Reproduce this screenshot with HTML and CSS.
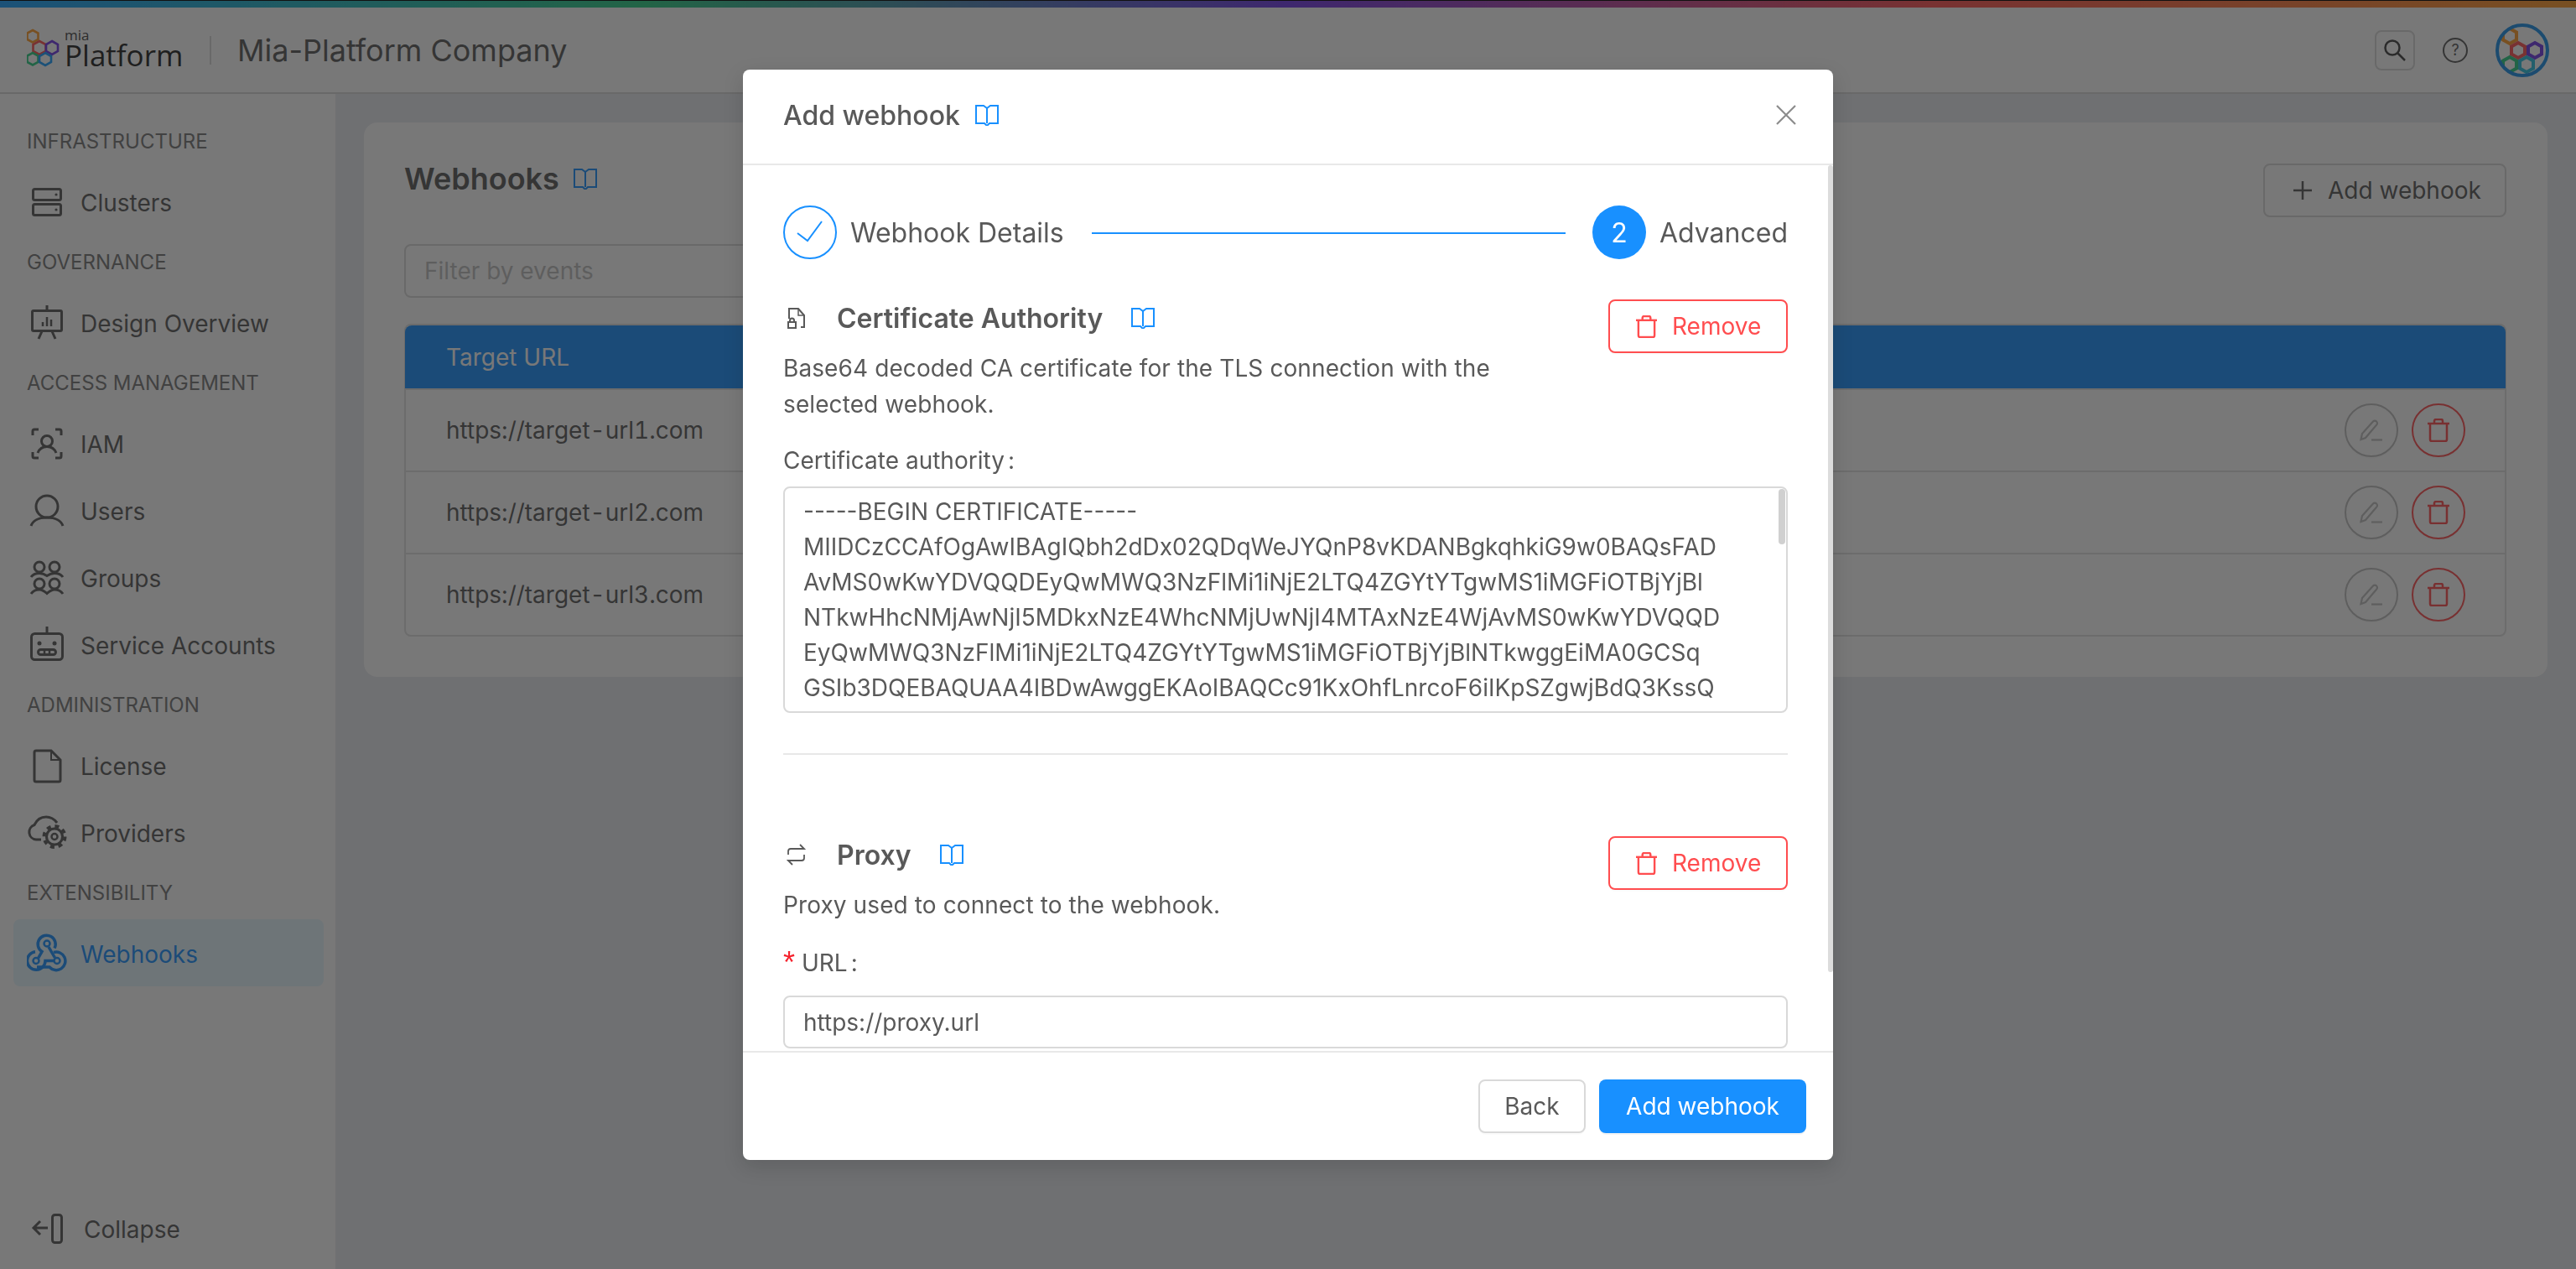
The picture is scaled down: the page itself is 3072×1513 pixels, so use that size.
FILE: index.html
```html
<!DOCTYPE html>
<html lang="en">
<head>
<meta charset="utf-8">
<title>Webhooks</title>
<link rel="stylesheet" href="styles.css">
</head>
<body>
<svg class="sprite" xmlns="http://www.w3.org/2000/svg">
  <symbol id="i-clusters" viewBox="0 0 48 48"><g fill="none" stroke="currentColor" stroke-width="3"><rect x="7.5" y="9.5" width="33" height="13" rx="2"/><rect x="7.5" y="27.5" width="33" height="13" rx="2"/></g><circle cx="35" cy="16" r="1.6" fill="currentColor"/><circle cx="35" cy="34" r="1.6" fill="currentColor"/></symbol>
  <symbol id="i-design" viewBox="0 0 48 48"><g fill="none" stroke="currentColor" stroke-width="3"><rect x="6.5" y="10.5" width="35" height="24" rx="1.5"/><path d="M24 4v6M18 35l-4 9M30 35l4 9"/><path d="M19 29v-5M24 29V18M29 29v-8" stroke-width="2.5"/></g></symbol>
  <symbol id="i-iam" viewBox="0 0 48 48"><g fill="none" stroke="currentColor" stroke-width="3"><path d="M7 15V10a2 2 0 0 1 2-2h5M34 8h5a2 2 0 0 1 2 2v5M41 35v5a2 2 0 0 1-2 2h-5M14 42H9a2 2 0 0 1-2-2v-5"/><circle cx="24" cy="22" r="6.5"/><path d="M13 36c2-5 6-7.500 11-7.500s9 2.500 11 7.500"/></g></symbol>
  <symbol id="i-users" viewBox="0 0 48 48"><g fill="none" stroke="currentColor" stroke-width="3"><circle cx="24" cy="20" r="13"/><path d="M5 43c2-6 9-10 19-10s17 4 19 10"/></g></symbol>
  <symbol id="i-groups" viewBox="0 0 48 48"><g fill="none" stroke="currentColor" stroke-width="3"><circle cx="15" cy="12" r="6"/><circle cx="33" cy="12" r="6"/><circle cx="15" cy="32" r="6"/><circle cx="33" cy="32" r="6"/><path d="M5 24c2-3 6-4.500 10-4.500 4 0 6 1 9 3 3-2 5-3 9-3s8 1.500 10 4.500"/><path d="M5 44c2-3 6-5 10-5s6 2 9 4.500c3-2.500 5-4.500 9-4.500s8 2 10 5"/></g></symbol>
  <symbol id="i-service" viewBox="0 0 48 48"><g fill="none" stroke="currentColor" stroke-width="3"><rect x="5.500" y="11.500" width="37" height="31" rx="4"/><path d="M24 3v8"/><rect x="13.500" y="30.500" width="21" height="6" rx="3"/><path d="M21 31v5M27 31v5" stroke-width="2.500"/></g><circle cx="15" cy="23" r="2.500" fill="currentColor"/><circle cx="33" cy="23" r="2.500" fill="currentColor"/></symbol>
  <symbol id="i-license" viewBox="0 0 48 48"><g fill="none" stroke="currentColor" stroke-width="3"><path d="M11 7h18l11 11v24a2 2 0 0 1-2 2H11a2 2 0 0 1-2-2V9a2 2 0 0 1 2-2z"/><path d="M29 7v11h11" stroke-width="2"/></g></symbol>
  <symbol id="i-providers" viewBox="0 0 48 48"><g fill="none" stroke="currentColor" stroke-width="3"><path d="M17 33h-6a9 9 0 0 1-2-17.500C12 9 17 6 23 6c6 0 10 3 13 7"/><circle cx="33" cy="29.500" r="9.500"/><circle cx="33" cy="29.500" r="12.500" stroke-width="4" stroke-dasharray="5 4.820"/><circle cx="33" cy="29.500" r="3.500" stroke-width="2.500"/></g></symbol>
  <symbol id="i-webhooks" viewBox="0 0 48 48"><g fill="none" stroke="currentColor" stroke-width="3.500"><circle cx="24" cy="13" r="3.500" stroke-width="2.500"/><circle cx="11" cy="33.500" r="3.500" stroke-width="2.500"/><circle cx="36" cy="33.500" r="3.500" stroke-width="2.500"/><path d="M13.500 30.500L18 22.500A10.500 10.500 0 1 1 33 18.500"/><path d="M26 17l7.500 13"/><path d="M32 23.500A10.800 10.800 0 1 1 27 41H12"/><path d="M10 22.700A10.800 10.800 0 1 0 22 33.500H32"/></g></symbol>
  <symbol id="i-collapse" viewBox="0 0 48 48"><g fill="none" stroke="currentColor" stroke-width="3"><rect x="30.500" y="8.500" width="11" height="33" rx="3"/><path d="M25 24H8M16 16l-8 8 8 8"/></g></symbol>
  <symbol id="i-book" viewBox="0 0 28 26"><path d="M1 2h9l4 3 4-3h9v21H17l-3 3-3-3H1zM14 5v18" fill="none" stroke="currentColor" stroke-width="2"/></symbol>
  <symbol id="i-trash" viewBox="0 0 26 28"><g fill="none" stroke="currentColor" stroke-width="2.500"><path d="M0 6h26"/><path d="M8 6V3a2 2 0 0 1 2-2h6a2 2 0 0 1 2 2v3"/><path d="M3 6v19a2 2 0 0 0 2 2h16a2 2 0 0 0 2-2V6"/></g></symbol>
  <symbol id="i-pencil" viewBox="0 0 28 28"><g fill="none" stroke="currentColor" stroke-width="2.200"><path d="M1.500 25l1.500-7L16 3.500c1-1.200 3-1.200 4 0 1.300 1 1.300 3 .2 4L7 23z"/><path d="M14 25.500h13"/></g></symbol>
  <symbol id="i-filelock" viewBox="0 0 24 26"><g fill="none" stroke="currentColor" stroke-width="2"><path d="M3 14V2h11l7 8v14h-4"/><path d="M14 2v8h7" stroke-width="1.500"/><rect x="2" y="18" width="9" height="7"/><path d="M4 18v-2a2.500 2.500 0 0 1 5 0v2"/></g></symbol>
  <symbol id="i-swap" viewBox="0 0 24 26"><g fill="none" stroke="currentColor" stroke-width="1.800"><path d="M2 13V9a3 3 0 0 1 3-3h16l-5-5"/><path d="M21 13v4a3 3 0 0 1-3 3H2l5 5"/></g></symbol>
  <symbol id="i-plus" viewBox="0 0 24 24"><path d="M12 1v22M1 12h22" fill="none" stroke="currentColor" stroke-width="2.500"/></symbol>
  <symbol id="i-search" viewBox="0 0 28 28"><g fill="none" stroke="currentColor" stroke-width="2.500"><circle cx="11" cy="11" r="8.500"/><path d="M17 17l9 9"/></g></symbol>
  <symbol id="i-close" viewBox="0 0 24 24"><path d="M1 1l22 22M23 1L1 23" fill="none" stroke="currentColor" stroke-width="2.200"/></symbol>
  <symbol id="i-check" viewBox="0 0 64 64"><path d="M17 33l12 9 17-23" fill="none" stroke="currentColor" stroke-width="2"/></symbol>
</svg>

<div class="app">
  <div class="rainbow"></div>
  <header class="topbar">
    <div class="brand">
      <svg class="brand-mark" viewBox="0 0 48 56" xmlns="http://www.w3.org/2000/svg">
        <g fill="none" stroke-width="2.600">
          <polygon stroke="#ff9b2a" points="7,2 13.500,5.500 13.500,13 7,16.500 .500,13 .500,5.500" />
          <polygon stroke="#ff5050" points="15,15 22.500,19 22.500,27 15,31 7.500,27 7.500,19" />
          <polygon stroke="#6e37e6" points="30,15 37,19 37,27 30,31 23,27 23,19" />
          <polygon stroke="#2acd82" points="7,29 13.500,32.500 13.500,40 7,43.500 .500,40 .500,32.500" />
          <polygon stroke="#1a9fff" points="22,29 29,33 29,40 22,44 15,40 15,33" />
        </g>
      </svg>
      <div class="wordmark"><span class="wordmark-mia">mia</span><span class="wordmark-platform">Platform</span></div>
    </div>
    <div class="brand-divider"></div>
    <div class="company">Mia-Platform Company</div>
    <div class="topbar-actions">
      <button class="search-btn"><svg class="ic-28"><use href="#i-search"/></svg></button>
      <span class="help">?</span>
      <svg class="avatar" viewBox="0 0 64 64" xmlns="http://www.w3.org/2000/svg">
        <defs><clipPath id="avatar-clip"><circle cx="32" cy="32" r="30"/></clipPath></defs>
        <g clip-path="url(#avatar-clip)" fill="none" stroke-width="4">
          <polygon stroke="#ff9b2a" points="17,6 25,10.500 25,19.500 17,24 9,19.500 9,10.500"/>
          <polygon stroke="#ff5050" points="27,23 35,27.500 35,36.500 27,41 19,36.500 19,27.500"/>
          <polygon stroke="#6e37e6" points="47,23 55,27.500 55,36.500 47,41 39,36.500 39,27.500"/>
          <polygon stroke="#2acd82" points="17,40 25,44.500 25,53.500 17,58 9,53.500 9,44.500"/>
          <polygon stroke="#2ac0e0" points="37,40 45,44.500 45,53.500 37,58 29,53.500 29,44.500"/>
        </g>
        <circle cx="32" cy="32" r="30" fill="none" stroke="#1a90e8" stroke-width="4"/>
      </svg>
    </div>
  </header>
  <div class="layout">
    <nav class="sidebar">
      <div class="nav-label">INFRASTRUCTURE</div>
      <a class="nav-item"><svg class="nav-icon"><use href="#i-clusters"/></svg>Clusters</a>
      <div class="nav-label">GOVERNANCE</div>
      <a class="nav-item"><svg class="nav-icon"><use href="#i-design"/></svg>Design Overview</a>
      <div class="nav-label">ACCESS MANAGEMENT</div>
      <a class="nav-item"><svg class="nav-icon"><use href="#i-iam"/></svg>IAM</a>
      <a class="nav-item"><svg class="nav-icon"><use href="#i-users"/></svg>Users</a>
      <a class="nav-item"><svg class="nav-icon"><use href="#i-groups"/></svg>Groups</a>
      <a class="nav-item"><svg class="nav-icon"><use href="#i-service"/></svg>Service Accounts</a>
      <div class="nav-label">ADMINISTRATION</div>
      <a class="nav-item"><svg class="nav-icon"><use href="#i-license"/></svg>License</a>
      <a class="nav-item"><svg class="nav-icon"><use href="#i-providers"/></svg>Providers</a>
      <div class="nav-label">EXTENSIBILITY</div>
      <a class="nav-item nav-item-active"><svg class="nav-icon"><use href="#i-webhooks"/></svg>Webhooks</a>
      <a class="nav-item nav-collapse"><svg class="nav-icon"><use href="#i-collapse"/></svg>Collapse</a>
    </nav>
    <main class="content">
      <section class="card">
        <div class="card-head">
          <h1 class="card-title">Webhooks<svg class="ic-book card-book"><use href="#i-book"/></svg></h1>
          <button class="btn-add"><svg class="ic-plus"><use href="#i-plus"/></svg>Add webhook</button>
        </div>
        <div class="filter">Filter by events</div>
        <div class="table">
          <div class="table-head">Target URL</div>
          <div class="table-row"><span>https://target-url1.com</span><span class="row-actions"><button class="round round-edit"><svg class="ic-28"><use href="#i-pencil"/></svg></button><button class="round round-del"><svg class="ic-trash-lg"><use href="#i-trash"/></svg></button></span></div>
          <div class="table-row"><span>https://target-url2.com</span><span class="row-actions"><button class="round round-edit"><svg class="ic-28"><use href="#i-pencil"/></svg></button><button class="round round-del"><svg class="ic-trash-lg"><use href="#i-trash"/></svg></button></span></div>
          <div class="table-row"><span>https://target-url3.com</span><span class="row-actions"><button class="round round-edit"><svg class="ic-28"><use href="#i-pencil"/></svg></button><button class="round round-del"><svg class="ic-trash-lg"><use href="#i-trash"/></svg></button></span></div>
        </div>
      </section>
    </main>
  </div>
</div>

<div class="mask">
  <div class="modal">
    <div class="modal-head">
      <div class="modal-title">Add webhook<svg class="ic-book modal-book"><use href="#i-book"/></svg></div>
      <svg class="ic-close"><use href="#i-close"/></svg>
    </div>
    <div class="modal-body">
      <div class="steps">
        <span class="step-circle step-done"><svg class="ic-check"><use href="#i-check"/></svg></span>
        <span class="step-title">Webhook Details</span>
        <span class="step-line"></span>
        <span class="step-circle step-current">2</span>
        <span class="step-title">Advanced</span>
      </div>

      <div class="section section-cert">
        <div class="section-head">
          <div class="section-intro">
            <h2 class="section-title"><svg class="section-icon"><use href="#i-filelock"/></svg>Certificate Authority<svg class="ic-book section-book"><use href="#i-book"/></svg></h2>
            <p class="section-desc">Base64 decoded CA certificate for the TLS connection with the selected webhook.</p>
          </div>
          <button class="btn-remove"><svg class="ic-trash"><use href="#i-trash"/></svg>Remove</button>
        </div>
        <div class="field-label field-label-tight">Certificate authority<span class="colon">:</span></div>
        <div class="textarea">-----BEGIN CERTIFICATE-----
MIIDCzCCAfOgAwIBAgIQbh2dDx02QDqWeJYQnP8vKDANBgkqhkiG9w0BAQsFAD
AvMS0wKwYDVQQDEyQwMWQ3NzFlMi1iNjE2LTQ4ZGYtYTgwMS1iMGFiOTBjYjBl
NTkwHhcNMjAwNjI5MDkxNzE4WhcNMjUwNjI4MTAxNzE4WjAvMS0wKwYDVQQD
EyQwMWQ3NzFlMi1iNjE2LTQ4ZGYtYTgwMS1iMGFiOTBjYjBlNTkwggEiMA0GCSq
GSIb3DQEBAQUAA4IBDwAwggEKAoIBAQCc91KxOhfLnrcoF6iIKpSZgwjBdQ3KssQ<span class="textarea-thumb"></span></div>
      </div>

      <div class="section-divider"></div>

      <div class="section section-proxy">
        <div class="section-head">
          <div class="section-intro">
            <h2 class="section-title"><svg class="section-icon"><use href="#i-swap"/></svg>Proxy<svg class="ic-book section-book section-book-proxy"><use href="#i-book"/></svg></h2>
            <p class="section-desc">Proxy used to connect to the webhook.</p>
          </div>
          <button class="btn-remove"><svg class="ic-trash"><use href="#i-trash"/></svg>Remove</button>
        </div>
        <div class="field-label"><span class="required">*</span>URL<span class="colon">:</span></div>
        <div class="input">https://proxy.url</div>
      </div>
      <span class="modal-thumb"></span>
    </div>
    <div class="modal-foot">
      <button class="btn-back">Back</button>
      <button class="btn-primary">Add webhook</button>
    </div>
  </div>
</div>
</body>
</html>
```
FILE: styles.css
```css
* { box-sizing: border-box; }
html, body { margin: 0; height: 100%; }
body {
  font-family: Inter, "Liberation Sans", sans-serif;
  font-size: 28px;
  color: #595959;
  background: #e8ebf0;
  overflow: hidden;
}
.sprite { display: none; }
button { font: inherit; color: inherit; background: #fff; cursor: pointer; }

.app { height: 1513px; display: flex; flex-direction: column; }
.rainbow {
  height: 9px;
  flex: none;
  border-top: 1px solid #000;
  background: linear-gradient(90deg, #1a9fff 0%, #2acd82 25%, #6e37e6 50%, #ff5050 75%, #ff9b2a 100%);
}
.topbar {
  height: 103px;
  flex: none;
  display: flex;
  align-items: center;
  padding: 0 32px;
  background: #fff;
  border-bottom: 2px solid #d9d9d9;
}
.brand { display: flex; align-items: center; width: 218px; }
.brand-mark { width: 48px; height: 56px; margin-right: -3px; margin-top: 5px; flex: none; }
.wordmark { display: flex; flex-direction: column; color: #222; font-family: "Open Sans", sans-serif; margin-top: -6px; }
.wordmark-mia { font-size: 17px; line-height: 18px; color: #444; }
.wordmark-platform { font-size: 35px; line-height: 30px; }
.brand-divider { width: 2px; height: 34px; background: #d9d9d9; }
.company { font-size: 36px; margin-left: 31px; color: #595959; }
.topbar-actions { margin-left: auto; display: flex; align-items: center; gap: 34px; }
.search-btn {
  width: 48px; height: 48px;
  border: 2px solid #d9d9d9;
  border-radius: 8px;
  padding: 0;
  display: flex; align-items: center; justify-content: center;
  color: #404040;
}
.ic-28 { width: 28px; height: 28px; display: block; }
.help {
  width: 30px; height: 30px;
  border: 2px solid #595959;
  border-radius: 50%;
  font-size: 18px;
  line-height: 26px;
  text-align: center;
  margin: 0 -1px;
}
.avatar { width: 64px; height: 64px; display: block; }

.layout { flex: 1; display: flex; min-height: 0; }
.sidebar {
  width: 400px;
  flex: none;
  background: #fff;
  padding: 24px 14px 9px 16px;
  display: flex;
  flex-direction: column;
}
.nav-label {
  height: 64px;
  display: flex;
  align-items: center;
  padding-left: 16px;
  font-size: 24px;
  color: #777;
}
.nav-item {
  height: 80px;
  flex: none;
  display: flex;
  align-items: center;
  gap: 16px;
  padding: 3px 0 0 16px;
  border-radius: 8px;
  color: #595959;
}
.nav-icon { width: 48px; height: 48px; flex: none; color: #595959; margin-top: -3px; }
.nav-item-active { background: #e6f7ff; color: #1890ff; }
.nav-item-active .nav-icon { color: #1890ff; }
.nav-collapse { margin-top: auto; gap: 20px; }

.content { flex: 1; padding: 34px; min-width: 0; }
.card { background: #fff; border-radius: 16px; padding: 49px 49px 48px 48px; }
.card-head { display: flex; justify-content: space-between; align-items: flex-start; }
.card-title {
  margin: 0;
  font-size: 36px;
  line-height: 36px;
  font-weight: 600;
  display: flex;
  align-items: center;
}
.ic-book { width: 28px; height: 26px; flex: none; color: #1890ff; }
.card-book { margin-left: 17px; }
.btn-add {
  width: 290px; height: 64px;
  border: 2px solid #d9d9d9;
  border-radius: 8px;
  display: flex; align-items: center;
  padding-left: 33px;
  gap: 18px;
}
.ic-plus { width: 24px; height: 24px; }
.filter {
  width: 520px; height: 64px;
  margin-top: 32px;
  border: 2px solid #d9d9d9;
  border-radius: 8px;
  padding-left: 22px;
  display: flex; align-items: center;
  color: #bfbfbf;
}
.table {
  margin-top: 31px;
  border: 2px solid #e0e0e0;
  border-radius: 8px;
}
.table-head {
  height: 75px;
  margin: 0 -1px;
  background: #1890ff;
  color: #fff;
  border-radius: 8px 8px 0 0;
  display: flex; align-items: center;
  padding-left: 49px;
}
.table-row {
  height: 98px;
  display: flex; align-items: center; justify-content: space-between;
  padding: 0 47px 0 48px;
  border-top: 2px solid #e0e0e0;
  font-variant-numeric: tabular-nums;
}
.row-actions { display: flex; gap: 16px; }
.round {
  width: 64px; height: 64px;
  border-radius: 50%;
  border: 2px solid #bfbfbf;
  padding: 0;
  display: flex; align-items: center; justify-content: center;
  box-shadow: 0 2px 0 rgba(0,0,0,.015);
}
.round-edit { color: #bfbfbf; }
.round-del { border-color: #ff4d4f; color: #ff4d4f; }
.ic-trash-lg { width: 26px; height: 28px; }

.mask {
  position: fixed;
  inset: 0;
  background: rgba(30,30,30,.6);
  display: flex;
  justify-content: center;
  align-items: flex-start;
  padding-top: 83px;
}
.modal {
  width: 1300px;
  height: 1300px;
  background: #fff;
  border-radius: 8px;
  display: flex;
  flex-direction: column;
  overflow: hidden;
  box-shadow: 0 8px 24px rgba(0,0,0,.15);
}
.modal-head {
  height: 114px;
  flex: none;
  border-bottom: 2px solid #e8e8e8;
  padding: 0 44px 4px 48px;
  display: flex; align-items: center; justify-content: space-between;
}
.modal-title { font-size: 32px; font-weight: 500; display: flex; align-items: center; }
.modal-book { margin-left: 18px; }
.ic-close { width: 24px; height: 24px; color: #8c8c8c; }
.modal-body {
  flex: 1;
  min-height: 0;
  overflow: hidden;
  padding: 48px 54px 0 48px;
  position: relative;
}
.modal-thumb {
  position: absolute;
  right: 0; top: 0;
  width: 6px; height: 962px;
  background: #dcdcdc;
  border-radius: 3px;
}
.steps { display: flex; align-items: center; height: 64px; }
.step-circle {
  width: 64px; height: 64px;
  flex: none;
  border-radius: 50%;
  display: flex; align-items: center; justify-content: center;
  font-size: 32px;
}
.step-done { border: 2px solid #1890ff; color: #1890ff; }
.ic-check { width: 64px; height: 64px; flex: none; }
.step-current { background: #1890ff; color: #fff; }
.step-title { font-size: 32px; margin-left: 16px; white-space: nowrap; }
.step-line { flex: 1; height: 2px; background: #1890ff; margin: 2px 32px 0 33px; }

.section-cert { margin-top: 48px; }
.section-proxy { margin-top: 97px; }
.section-head { display: flex; justify-content: space-between; align-items: flex-start; }
.section-intro { min-width: 0; }
.section-title {
  margin: 0;
  height: 44px;
  font-size: 32px;
  font-weight: 600;
  display: flex; align-items: center;
}
.section-icon { width: 24px; height: 26px; margin-left: 4px; margin-right: 36px; flex: none; color: #595959; }
.section-book { margin-left: 34px; }
.section-book-proxy { margin-left: 35px; }
.section-desc { margin: 17px 0 0; width: 900px; line-height: 43px; letter-spacing: .1px; }
.btn-remove {
  width: 214px; height: 64px;
  flex: none;
  border: 2px solid #ff4d4f;
  border-radius: 8px;
  color: #ff4d4f;
  display: flex; align-items: center;
  padding-left: 31px;
  gap: 18px;
  box-shadow: 0 2px 0 rgba(0,0,0,.015);
}
.ic-trash { width: 25px; height: 27px; }
.field-label { margin-top: 25px; line-height: 44px; margin-bottom: 17px; display: flex; align-items: center; }
.field-label-tight { margin-top: 23px; margin-bottom: 9px; }
.colon { margin-left: 4px; margin-right: 8px; }
.required {
  color: #f5222d;
  margin-right: 8px;
  font-family: "Liberation Sans", sans-serif;
  font-size: 36px;
  line-height: 44px;
}
.textarea {
  height: 270px;
  border: 2px solid #d9d9d9;
  border-radius: 8px;
  padding: 7px 22px;
  line-height: 42px;
  white-space: pre;
  overflow: hidden;
  position: relative;
}
.textarea-thumb {
  position: absolute;
  right: 1px; top: 1px;
  width: 8px; height: 66px;
  background: #d0d0d0;
  border-radius: 4px;
}
.section-divider { height: 2px; background: #e8e8e8; margin-top: 48px; }
.input {
  height: 63px;
  border: 2px solid #d9d9d9;
  border-radius: 8px;
  padding-left: 22px;
  display: flex; align-items: center;
}
.modal-foot {
  height: 130px;
  flex: none;
  border-top: 2px solid #e8e8e8;
  padding: 32px;
  display: flex; justify-content: flex-end; gap: 16px;
}
.btn-back {
  width: 128px; height: 64px;
  border: 2px solid #d9d9d9;
  border-radius: 8px;
  box-shadow: 0 2px 0 rgba(0,0,0,.015);
}
.btn-primary {
  width: 247px; height: 64px;
  border: 0;
  border-radius: 8px;
  background: #1890ff;
  color: #fff;
  box-shadow: 0 2px 0 rgba(0,0,0,.045);
}
```
